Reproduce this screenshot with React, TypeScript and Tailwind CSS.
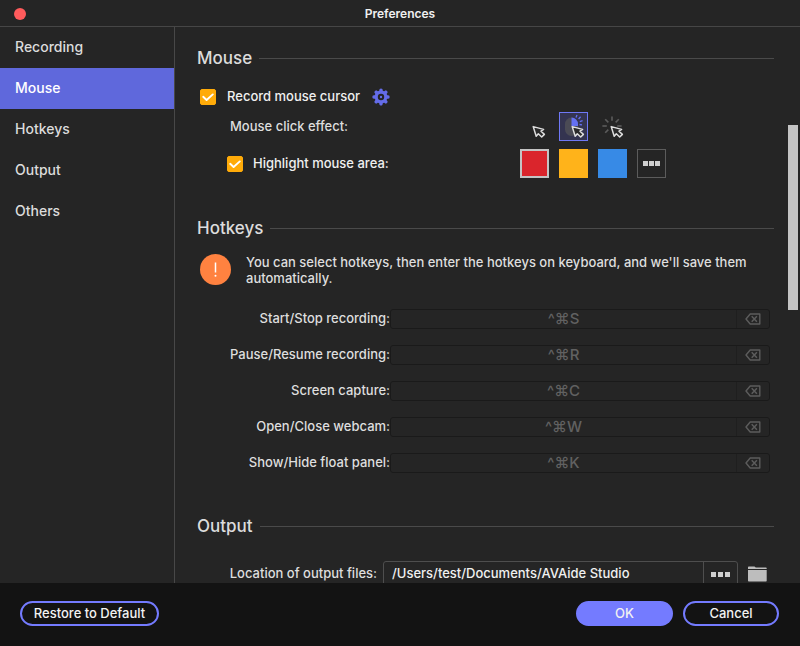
import { useState } from 'react';
import type { ReactNode } from 'react';

const TABS = ['Recording', 'Mouse', 'Hotkeys', 'Output', 'Others'];

const SWATCHES = [
  { name: 'Red', fill: 'bg-[#da252c]' },
  { name: 'Yellow', fill: 'bg-[#ffb31a]' },
  { name: 'Blue', fill: 'bg-[#378ae6]' },
];

const HOTKEYS = [
  { id: 'start', label: 'Start/Stop recording:', keys: '^⌘S' },
  { id: 'pause', label: 'Pause/Resume recording:', keys: '^⌘R' },
  { id: 'capture', label: 'Screen capture:', keys: '^⌘C' },
  { id: 'webcam', label: 'Open/Close webcam:', keys: '^⌘W' },
  { id: 'panel', label: 'Show/Hide float panel:', keys: '^⌘K' },
];

function SectionTitle({ children }: { children: ReactNode }) {
  return (
    <div className="flex h-6 items-center gap-[7px]">
      <h2 className="text-[17px] leading-6 font-medium text-[#dcdcdc]">{children}</h2>
      <div className="h-px flex-1 bg-[#4a4a4a]" />
    </div>
  );
}

function Checkbox({ id }: { id: string }) {
  return (
    <span className="grid size-4 shrink-0">
      <input
        id={id}
        type="checkbox"
        defaultChecked
        className="peer col-start-1 row-start-1 size-4 appearance-none rounded-[2px] border border-[#ffab09] checked:bg-[#ffab09]"
      />
      <svg
        viewBox="0 0 16 16"
        className="pointer-events-none invisible col-start-1 row-start-1 size-4 peer-checked:visible"
        fill="none"
        stroke="#fff"
        strokeWidth="1.9"
        strokeLinecap="round"
        strokeLinejoin="round"
      >
        <path d="M3.2 7.8 6.6 11 12.8 5.4" />
      </svg>
    </span>
  );
}

function Pointer() {
  return (
    <path
      d="M13.2 14.6 16.2 24.2 18.3 21.8 21.7 25 24.4 22.4 21 19.2 23.6 17.4Z"
      fill="#2b2b2b"
      stroke="#dedede"
      strokeWidth="1.5"
      strokeLinejoin="round"
    />
  );
}

function GearIcon() {
  return (
    <svg viewBox="0 0 18 18" className="size-[18px]">
      <g fill="#646ce8">
        {[0, 45, 90, 135, 180, 225, 270, 315].map((angle) => (
          <path key={angle} d="M7 4 7.6.9Q9-.1 10.4.9L11 4Z" transform={`rotate(${angle} 9 9)`} />
        ))}
      </g>
      <circle cx="9" cy="9" r="4.8" fill="#252525" stroke="#646ce8" strokeWidth="3.2" />
      <circle cx="9" cy="9" r="1.2" fill="#646ce8" />
    </svg>
  );
}

function ClickEffectIcon({ kind }: { kind: string }) {
  return (
    <svg viewBox="0 0 29 29" className="size-[29px]">
      {kind === 'mouse' && (
        <>
          <rect x="6" y="5.5" width="13" height="18.5" rx="6.5" fill="#4b4b55" />
          <path d="M12.5 5.5a6.5 6.5 0 0 1 6.5 6.5v2h-6.5Z" fill="#6470f2" />
          <path
            d="M17 5.5 18 3M19.6 7 21.6 4.8M20.8 9.6 23.6 8.6M20.5 12.5 23 12.8"
            stroke="#6470f2"
            strokeWidth="1.3"
          />
        </>
      )}
      {kind === 'burst' && (
        <g stroke="#5c5c5c" strokeWidth="1.6">
          {[0, 45, 90, 225, 270, 315].map((angle) => (
            <path key={angle} d="M14 4.4V8.8" transform={`rotate(${angle} 14 14)`} />
          ))}
        </g>
      )}
      <Pointer />
    </svg>
  );
}

function ClearIcon() {
  return (
    <svg viewBox="0 0 16 12" className="h-3 w-4" fill="none" stroke="#5c5c5c" strokeWidth="1.4">
      <path d="M5.2 1h9.6v10H5.2L1 6Z" strokeLinejoin="round" />
      <path d="m6.7 3.2 5.2 5.6m0-5.6L6.7 8.8" strokeWidth="1.5" />
    </svg>
  );
}

function Dots({ gap }: { gap: string }) {
  return (
    <span className={`flex ${gap}`}>
      <span className="size-[5px] bg-[#cfcfcf]" />
      <span className="size-[5px] bg-[#cfcfcf]" />
      <span className="size-[5px] bg-[#cfcfcf]" />
    </span>
  );
}

export default function App() {
  const [tab, setTab] = useState('Mouse');
  const [effect, setEffect] = useState('mouse');
  const [swatch, setSwatch] = useState('Red');

  return (
    <div className="flex h-screen flex-col bg-[#252525] font-['Inter','Liberation_Sans',sans-serif] text-[13px] font-medium text-[#dedede]">
      <header className="grid h-[27px] shrink-0 grid-cols-[1fr_auto_1fr] items-center border-b border-[#464646] pt-px">
        <button type="button" aria-label="Close" className="ml-[14px] size-3 rounded-full bg-[#ff5b5c]" />
        <h1 className="text-xs font-semibold text-[#f0f0f0]">Preferences</h1>
      </header>

      <div className="flex min-h-0 flex-1">
        <nav className="flex w-[175px] shrink-0 flex-col border-r border-[#484848] text-sm">
          {TABS.map((name) => (
            <button
              key={name}
              type="button"
              onClick={() => setTab(name)}
              aria-current={tab === name}
              className={`h-[41px] pb-[2px] pl-[15px] text-left ${tab === name ? 'bg-[#5f68dc] text-white' : 'text-[#dcdcdc]'}`}
            >
              {name}
            </button>
          ))}
        </nav>

        <main className="min-w-0 flex-1 overflow-hidden pt-[19px] pr-[14px] pl-[22px]">
          <section>
            <SectionTitle>Mouse</SectionTitle>
            <div className="mt-[15px] flex h-6 items-center pl-[3px]">
              <Checkbox id="record-cursor" />
              <label htmlFor="record-cursor" className="ml-[11px] text-[#f0f0f0]">
                Record mouse cursor
              </label>
              <button type="button" aria-label="Cursor settings" className="ml-3">
                <GearIcon />
              </button>
            </div>
            <div className="mt-[3px] grid grid-cols-[323px_1fr] items-center gap-y-2">
              <span className="pl-[33px]">Mouse click effect:</span>
              <div className="flex gap-[10px]">
                {['none', 'mouse', 'burst'].map((kind) => (
                  <button
                    key={kind}
                    type="button"
                    aria-label={`Click effect ${kind}`}
                    aria-pressed={effect === kind}
                    onClick={() => setEffect(kind)}
                    className={effect === kind ? 'bg-[#343450] outline -outline-offset-1 outline-[#6f78f5]' : ''}
                  >
                    <ClickEffectIcon kind={kind} />
                  </button>
                ))}
              </div>
              <div className="flex items-center pl-[30px]">
                <Checkbox id="highlight-area" />
                <label htmlFor="highlight-area" className="ml-[10px] text-[#f0f0f0]">
                  Highlight mouse area:
                </label>
              </div>
              <div className="flex gap-[10px]">
                {SWATCHES.map(({ name, fill }) => (
                  <button
                    key={name}
                    type="button"
                    aria-label={name}
                    aria-pressed={swatch === name}
                    onClick={() => setSwatch(name)}
                    className={`size-[29px] ${fill} ${swatch === name ? 'border-2 border-[#c4c4c4]' : ''}`}
                  />
                ))}
                <button
                  type="button"
                  aria-label="More colors"
                  className="flex size-[29px] items-center justify-center border border-[#5c5c5c]"
                >
                  <Dots gap="gap-px" />
                </button>
              </div>
            </div>
          </section>

          <section className="mt-[38px]">
            <SectionTitle>Hotkeys</SectionTitle>
            <div className="mt-[14px] flex gap-[15px] pl-[3px]">
              <svg viewBox="0 0 31 31" className="size-[31px] shrink-0">
                <circle cx="15.5" cy="15.5" r="15.5" fill="#ff8240" />
                <path d="M15.5 8.5v10" stroke="#fff" strokeWidth="1.5" />
                <circle cx="15.5" cy="21.8" r="1" fill="#fff" />
              </svg>
              <p className="leading-4">
                You can select hotkeys, then enter the hotkeys on keyboard, and we'll save them automatically.
              </p>
            </div>
            <div className="mt-[23px] flex flex-col gap-4 pr-1">
              {HOTKEYS.map(({ id, label, keys }) => (
                <div key={id} className="flex h-5 items-center">
                  <label htmlFor={id} className="w-[193px] shrink-0 text-right">
                    {label}
                  </label>
                  <div className="flex h-5 min-w-0 flex-1 rounded-[3px] border border-[#1a1a1a]">
                    <input
                      id={id}
                      readOnly
                      defaultValue={keys}
                      className="min-w-0 flex-1 border-r border-[#1f1f1f] text-center text-[15px] text-[#616161] outline-none"
                    />
                    <button
                      type="button"
                      aria-label="Clear hotkey"
                      className="flex w-8 items-center justify-center"
                    >
                      <ClearIcon />
                    </button>
                  </div>
                </div>
              ))}
            </div>
          </section>

          <section className="mt-[41px]">
            <SectionTitle>Output</SectionTitle>
            <div className="mt-[23px] flex h-[26px] items-center pr-[7px]">
              <label htmlFor="location" className="w-[180px] shrink-0 text-right">
                Location of output files:
              </label>
              <div className="ml-[6px] flex h-[26px] min-w-0 flex-1 rounded-[3px] border border-[#4e4e4e]">
                <input
                  id="location"
                  defaultValue="/Users/test/Documents/AVAide Studio"
                  className="min-w-0 flex-1 pl-2 text-[#f0f0f0] outline-none"
                />
                <button
                  type="button"
                  aria-label="Browse"
                  className="flex w-[34px] items-center justify-center border-l border-[#4e4e4e]"
                >
                  <Dots gap="gap-[2px]" />
                </button>
              </div>
              <button type="button" aria-label="Open folder" className="ml-[10px]">
                <svg viewBox="0 0 19 16" className="h-4 w-[19px]" fill="#bdbdbd">
                  <path d="M0 1.2Q0 .5.8.5H6.5L7.8 1.6H18Q18.7 1.6 18.7 2.6V3H0Z" />
                  <path d="M0 4H18.7V14.8Q18.7 15.6 18 15.6H.8Q0 15.6 0 14.8Z" />
                </svg>
              </button>
            </div>
          </section>
        </main>

        <div className="mr-[2px] w-[10px] shrink-0 pt-[98px]">
          <div className="h-[185px] bg-[#c4c4c4]" />
        </div>
      </div>

      <footer className="flex h-[63px] shrink-0 items-center bg-[#131313] pr-[21px] pb-[3px] pl-5 text-[#f2f2f2]">
        <button type="button" className="h-[25px] w-[139px] rounded-full border-2 border-[#747bff] pt-px">
          Restore to Default
        </button>
        <button type="button" className="ml-auto h-[25px] w-[97px] rounded-full bg-[#747bff] pt-px">
          OK
        </button>
        <button type="button" className="ml-[10px] h-[25px] w-24 rounded-full border-2 border-[#747bff] pt-px">
          Cancel
        </button>
      </footer>
    </div>
  );
}
